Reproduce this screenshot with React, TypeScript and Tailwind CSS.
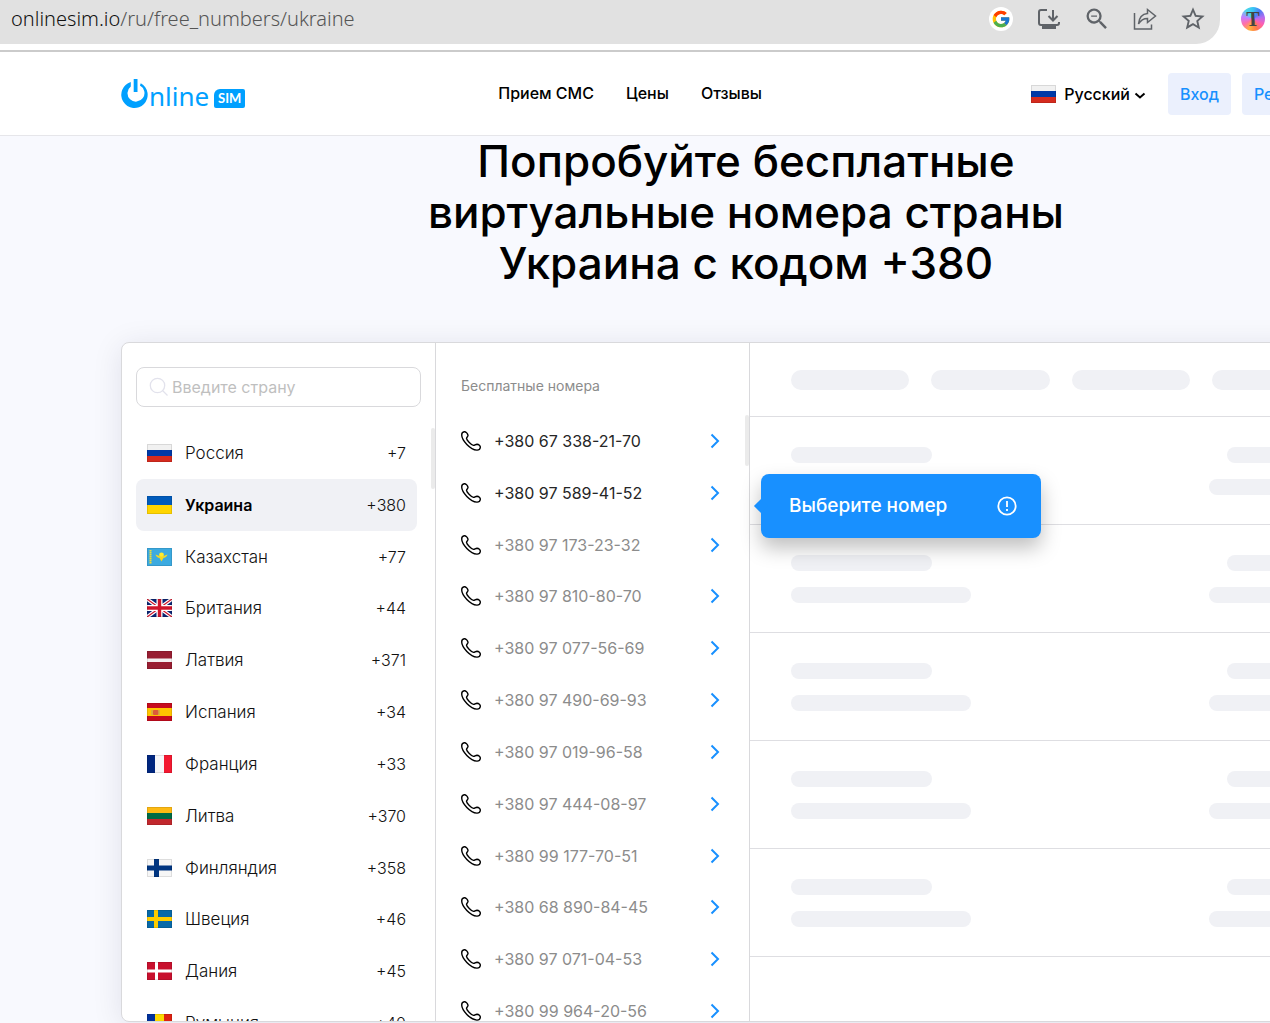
import type { ReactNode } from "react";
import { FcGoogle } from "react-icons/fc";
import { MdStarBorder, MdZoomOut } from "react-icons/md";

type FlagName =
  | "ru" | "ua" | "kz" | "gb" | "lv" | "es" | "fr" | "lt" | "fi" | "se" | "dk" | "ro";

const flagArt: Record<FlagName, ReactNode> = {
  ru: (
    <>
      <rect width="25" height="18" fill="#f1f1f1" />
      <rect y="6" width="25" height="6" fill="#0039a6" />
      <rect y="12" width="25" height="6" fill="#d52b1e" />
    </>
  ),
  ua: (
    <>
      <rect width="25" height="9" fill="#005bbb" />
      <rect y="9" width="25" height="9" fill="#ffd500" />
    </>
  ),
  kz: (
    <>
      <rect width="25" height="18" fill="#3caae0" />
      <path d="M3.5 2v14" stroke="#f3dc2e" strokeWidth="2" strokeDasharray="1.5 .5" />
      <circle cx="14.5" cy="7" r="2.4" fill="#ffec2d" />
      <path d="M8.5 6.5c2 .2 3 2 6 2s4-1.800 6-2c-1 3-3 3-4 3.500l-2 3.500-2-3.500c-1-.5-3-.5-4-3.500z" fill="#f5d922" />
    </>
  ),
  gb: (
    <>
      <rect width="25" height="18" fill="#0a2472" />
      <path d="M0 0l25 18M25 0L0 18" stroke="#fff" strokeWidth="3.600" />
      <path d="M0 0l25 18M25 0L0 18" stroke="#cf142b" strokeWidth="1.200" />
      <path d="M12.500 0v18M0 9h25" stroke="#fff" strokeWidth="6" />
      <path d="M12.500 0v18M0 9h25" stroke="#cf142b" strokeWidth="3.400" />
    </>
  ),
  lv: (
    <>
      <rect width="25" height="18" fill="#981e32" />
      <rect y="7.500" width="25" height="3.500" fill="#f4f1f2" />
    </>
  ),
  es: (
    <>
      <rect width="25" height="18" fill="#c60b1e" />
      <rect y="5" width="25" height="8" fill="#ffc400" />
      <rect x="6" y="7" width="5.500" height="5" rx="1" fill="#dc5a3a" />
      <path d="M5 7v5M12 7v5" stroke="#b89a6a" />
    </>
  ),
  fr: (
    <>
      <rect width="25" height="18" fill="#f7f7f9" />
      <rect width="8" height="18" fill="#00267f" />
      <rect x="17" width="8" height="18" fill="#f31830" />
    </>
  ),
  lt: (
    <>
      <rect width="25" height="6" fill="#fdb913" />
      <rect y="6" width="25" height="6" fill="#006a44" />
      <rect y="12" width="25" height="6" fill="#c1272d" />
    </>
  ),
  fi: (
    <>
      <rect width="25" height="18" fill="#f6f6f6" />
      <path d="M9.500 0v18M0 9h25" stroke="#003580" strokeWidth="5" />
    </>
  ),
  se: (
    <>
      <rect width="25" height="18" fill="#0869a8" />
      <path d="M9 0v18M0 9h25" stroke="#fecc00" strokeWidth="4" />
    </>
  ),
  dk: (
    <>
      <rect width="25" height="18" fill="#c8102e" />
      <path d="M9.500 0v18M0 9h25" stroke="#fff" strokeWidth="3" />
    </>
  ),
  ro: (
    <>
      <rect width="25" height="18" fill="#fcd800" />
      <rect width="8" height="18" fill="#00319c" />
      <rect x="17" width="8" height="18" fill="#de2110" />
    </>
  ),
};

function Flag({ name }: { name: FlagName }) {
  return (
    <svg viewBox="0 0 25 18" className="h-[18px] w-[25px] shrink-0" aria-hidden="true">
      {flagArt[name]}
      <rect x=".5" y=".5" width="24" height="17" fill="none" stroke="#000" strokeOpacity=".1" />
    </svg>
  );
}

const countries: { flag: FlagName; name: string; code: string }[] = [
  { flag: "ru", name: "Россия", code: "+7" },
  { flag: "ua", name: "Украина", code: "+380" },
  { flag: "kz", name: "Казахстан", code: "+77" },
  { flag: "gb", name: "Британия", code: "+44" },
  { flag: "lv", name: "Латвия", code: "+371" },
  { flag: "es", name: "Испания", code: "+34" },
  { flag: "fr", name: "Франция", code: "+33" },
  { flag: "lt", name: "Литва", code: "+370" },
  { flag: "fi", name: "Финляндия", code: "+358" },
  { flag: "se", name: "Швеция", code: "+46" },
  { flag: "dk", name: "Дания", code: "+45" },
  { flag: "ro", name: "Румыния", code: "+40" },
];

const numbers = [
  "+380 67 338-21-70",
  "+380 97 589-41-52",
  "+380 97 173-23-32",
  "+380 97 810-80-70",
  "+380 97 077-56-69",
  "+380 97 490-69-93",
  "+380 97 019-96-58",
  "+380 97 444-08-97",
  "+380 99 177-70-51",
  "+380 68 890-84-45",
  "+380 97 071-04-53",
  "+380 99 964-20-56",
];

function PhoneIcon() {
  return (
    <svg viewBox="0 0 20 20" className="size-5 shrink-0" fill="none" stroke="#000" strokeWidth="1.400" strokeLinejoin="round" aria-hidden="true">
      <path d="M3.200.8C4.800.6 6.500 2.400 7 4.100c.3 1.500-1.600 2-1.500 3.300.2 1.800 4.900 6.600 7 7 1.200.1 2-1.200 3.500-1.200 1.700.1 3.500 1.600 3.300 3.300-.3 1.800-1.900 2.700-3.500 2.600C9.300 18.600.8 9.400.7 4 .7 2.300 1.800 1 3.200.8z" />
    </svg>
  );
}

function BrowserBar() {
  return (
    <div className="flex h-[52px] justify-between border-b-2 border-[#cbcbcb] bg-white">
      <div className="flex h-11 min-w-0 flex-1 items-center justify-between rounded-br-[24px] bg-[#e1e1e1] pr-[13px] pb-[6px] pl-[11px]">
        <p className="font-['Noto_Sans',sans-serif] text-[20px] leading-6 font-light text-[#555]">
          <span className="text-[#111]">onlinesim.io</span>/ru/free_numbers/ukraine
        </p>
        <div className="flex items-center gap-5 text-[#5f6368]">
          <button type="button" aria-label="Google" className="flex size-7 items-center justify-center">
            <span className="flex size-6 items-center justify-center rounded-full bg-white">
              <FcGoogle className="size-5" />
            </span>
          </button>
          <button type="button" aria-label="Установить" className="flex size-7 items-center justify-center">
            <svg viewBox="0 0 24 24" className="size-6" fill="none" stroke="currentColor" strokeWidth="2" aria-hidden="true">
              <path d="M10 3H4a2 2 0 0 0-2 2v11a2 2 0 0 0 2 2h16a2 2 0 0 0 2-2v-1M16 3v10M11.500 9l4.500 4.500L20.500 9" />
              <path d="M6 18h12v3H6z" fill="currentColor" />
            </svg>
          </button>
          <button type="button" aria-label="Масштаб" className="flex size-7 items-center justify-center">
            <MdZoomOut className="size-7" />
          </button>
          <button type="button" aria-label="Поделиться" className="flex size-7 items-center justify-center">
            <svg viewBox="0 0 24 24" className="size-6" fill="none" stroke="currentColor" strokeWidth="1.500" aria-hidden="true">
              <path d="M1.500 6v16h17v-4.500" />
              <path d="M14.500 2.500L22.500 9l-8 6.500v-4C10.500 11.500 7.500 13.500 5.500 17 6 11.500 9 7 14.500 6.500z" />
            </svg>
          </button>
          <button type="button" aria-label="В закладки" className="flex size-7 items-center justify-center">
            <MdStarBorder className="size-7" />
          </button>
        </div>
      </div>
      <div className="flex h-11 w-[50px] items-center justify-end pr-[5px] pb-[6px]">
        <button
          type="button"
          aria-label="Расширение"
          className="flex size-6 items-center justify-center rounded-full bg-[conic-gradient(#38c6f4,#4b7bf5,#b56cf0,#ff5fb0,#ff7a4a,#ffb03a,#ff6fa8,#c77dff,#4fd8e8,#38c6f4)] font-['Liberation_Serif',serif] text-[20px] leading-6 font-bold text-[#444]"
        >
          T
        </button>
      </div>
    </div>
  );
}

function Logo() {
  return (
    <a href="#home" aria-label="OnlineSIM" className="flex items-end pb-px text-[#00a0ff]">
      <svg viewBox="0 0 27 29" className="h-[29px] w-[27px]" aria-hidden="true">
        <path d="M9.800 3.100A13.200 13.200 0 1 0 19.800 4.200L18.900 6.600A8.500 8.500 0 1 1 9.800 7.400z" fill="currentColor" />
        <rect x="12.700" y="0" width="3.800" height="13" fill="currentColor" />
      </svg>
      <span className="-mb-1 ml-px font-['Noto_Sans',sans-serif] text-[26px] leading-8">nline</span>
      <span className="ml-[5px] flex h-[19px] w-[31px] items-center justify-center rounded-[2px] rounded-tl-[6px] bg-[#00a0ff] font-['Lato',sans-serif] text-[13px] leading-4 font-bold text-white">
        SIM
      </span>
    </a>
  );
}

function SiteHeader() {
  return (
    <header className="border-b border-[#e6e6ea] bg-white">
      <div className="mx-auto flex h-[83px] w-[1250px] items-center">
        <Logo />
        <nav className="ml-[253px] flex gap-8 pb-px text-[16px] leading-6 font-medium text-black">
          <a href="#sms">Прием СМС</a>
          <a href="#prices">Цены</a>
          <a href="#reviews">Отзывы</a>
        </nav>
        <div className="ml-auto flex items-center">
          <Flag name="ru" />
          <label className="ml-2 flex items-center">
            <span className="sr-only">Язык</span>
            <select className="field-sizing-content appearance-none bg-transparent text-[16px] leading-6 font-medium text-black">
              <option>Русский</option>
            </select>
            <svg viewBox="0 0 12 8" className="mt-1 ml-1 h-2 w-3" fill="none" stroke="#000" strokeWidth="2" aria-hidden="true">
              <path d="M1.500 1.500L6 5.500l4.500-4" />
            </svg>
          </label>
          <a href="#login" className="ml-[22px] flex h-[42px] w-[63px] items-center justify-center rounded-[4px] bg-[#ebf0fd] pt-px text-[16px] leading-6 font-medium text-[#1890ff]">
            Вход
          </a>
          <a href="#register" className="ml-[11px] flex h-[42px] w-[125px] items-center justify-center rounded-[4px] bg-[#ebf0fd] pt-px text-[16px] leading-6 font-medium text-[#1890ff]">
            Регистрация
          </a>
          <span className="w-1" />
        </div>
      </div>
    </header>
  );
}

function CountryColumn() {
  return (
    <section className="relative w-[314px] shrink-0 border-r border-[#d9d9dc]">
      <label className="mx-[14px] mt-6 flex h-10 items-center rounded-[8px] border border-[#d9d9dc] pl-3">
        <span className="sr-only">Страна</span>
        <svg viewBox="0 0 20 20" className="size-5 shrink-0" fill="none" stroke="#e2e2ec" strokeWidth="1.300" aria-hidden="true">
          <circle cx="8.500" cy="8.500" r="7.200" />
          <path d="M13.500 13.500l5 5" />
        </svg>
        <input
          type="text"
          placeholder="Введите страну"
          className="ml-[3px] w-full min-w-0 bg-transparent text-[16px] leading-6 outline-none placeholder:text-[#bfbfbf]"
        />
      </label>
      <ul className="mt-5 mr-[18px] ml-[14px] grid h-[622px] grid-rows-12">
        {countries.map((c) => (
          <li key={c.name} className="grid">
            <button
              type="button"
              className={
                c.name === "Украина"
                  ? "flex items-center rounded-[8px] bg-[#f0f1f5] px-[11px] text-left"
                  : "flex items-center px-[11px] text-left"
              }
            >
              <Flag name={c.flag} />
              <span
                className={
                  c.name === "Украина"
                    ? "ml-[13px] text-[16px] leading-6 font-semibold text-black"
                    : "ml-[13px] text-[17px] leading-6 font-light text-[#111]"
                }
              >
                {c.name}
              </span>
              <span className="ml-auto text-[16px] leading-6 font-light text-[#111]">{c.code}</span>
            </button>
          </li>
        ))}
      </ul>
      <div className="absolute top-[85px] right-0 h-[61px] w-1 rounded-full bg-[#ebebeb]" />
    </section>
  );
}

function NumberColumn() {
  return (
    <section className="relative w-[314px] shrink-0 border-r border-[#d9d9dc]">
      <h2 className="mt-[33px] ml-[25px] text-[14px] leading-5 text-[#8c8c8c]">Бесплатные номера</h2>
      <ul className="mt-[19px] grid h-[622px] grid-rows-12">
        {numbers.map((n, i) => (
          <li key={n} className="grid">
            <a href="#number" className="flex items-center pr-[29px] pl-[25px]">
              <PhoneIcon />
              <span
                className={
                  i < 2
                    ? "ml-[13px] text-[16px] leading-6 text-[#262626]"
                    : "ml-[13px] text-[16px] leading-6 text-[#8c8c8c]"
                }
              >
                {n}
              </span>
              <svg viewBox="0 0 10 16" className="ml-auto h-4 w-[10px]" fill="none" stroke="#1890ff" strokeWidth="2" aria-hidden="true">
                <path d="M1.500 1.500L8 8l-6.500 6.500" />
              </svg>
            </a>
          </li>
        ))}
      </ul>
      <div className="absolute top-[72px] right-0 h-[51px] w-1 rounded-full bg-[#ebebeb]" />
    </section>
  );
}

function MessagesColumn() {
  return (
    <section className="relative min-w-0 flex-1">
      <div className="grid h-[74px] grid-cols-4 items-center gap-[22px] border-b border-[#dedee2] pr-10 pl-[41px]">
        {[0, 1, 2, 3].map((i) => (
          <div key={i} className="h-5 rounded-full bg-[#f0f1f5]" />
        ))}
      </div>
      {[0, 1, 2, 3, 4].map((i) => (
        <div key={i} className="flex h-[108px] flex-col gap-4 border-b border-[#dedee2] pt-[30px] pr-10 pl-[41px]">
          <div className="flex justify-between">
            <div className="h-4 w-[141px] rounded-full bg-[#f0f1f5]" />
            <div className="h-4 w-[103px] rounded-full bg-[#f0f1f5]" />
          </div>
          <div className="flex justify-between">
            <div className="h-4 w-[180px] rounded-full bg-[#f0f1f5]" />
            <div className="h-4 w-[121px] rounded-full bg-[#f0f1f5]" />
          </div>
        </div>
      ))}
      <div
        role="status"
        className="absolute top-[131px] left-[11px] flex h-16 w-[280px] items-center justify-between rounded-[8px] bg-[#1890ff] pr-6 pl-7 text-[19px] leading-6 font-medium text-white shadow-[0_10px_20px_rgba(0,0,0,0.25)]"
      >
        <span className="absolute top-1/2 -left-[5px] size-[10px] -translate-y-1/2 rotate-45 bg-[#1890ff]" />
        <span className="relative">Выберите номер</span>
        <svg viewBox="0 0 20 20" className="size-5" fill="none" stroke="#fff" strokeWidth="1.800" aria-hidden="true">
          <circle cx="10" cy="10" r="8.700" />
          <path d="M10 5v6M10 13v2" />
        </svg>
      </div>
    </section>
  );
}

export default function App() {
  return (
    <div className="min-h-screen overflow-hidden bg-[#f8f9fe] font-['Inter','Liberation_Sans',sans-serif]">
      <BrowserBar />
      <div className="min-w-[1492px]">
        <SiteHeader />
        <main className="mx-auto w-[1250px] pb-px">
          <h1 className="mx-auto max-w-[720px] text-center text-[44px] leading-[51px] font-medium text-black">
            Попробуйте бесплатные виртуальные номера страны Украина с кодом +380
          </h1>
          <div className="mt-[53px] flex h-[680px] overflow-hidden rounded-[8px] border border-[#d9d9dc] bg-white shadow-[0_4px_30px_rgba(20,20,60,0.1)]">
            <CountryColumn />
            <NumberColumn />
            <MessagesColumn />
          </div>
        </main>
      </div>
    </div>
  );
}
